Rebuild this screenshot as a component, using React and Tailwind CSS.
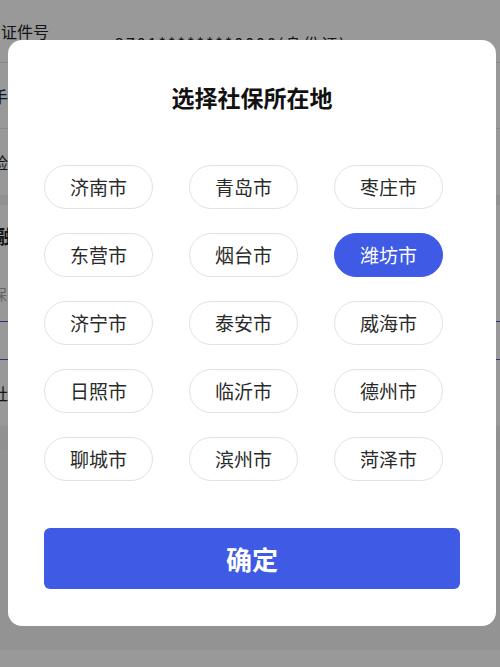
import React, { useState } from 'react';

const CITIES = [
  '济南市', '青岛市', '枣庄市',
  '东营市', '烟台市', '潍坊市',
  '济宁市', '泰安市', '威海市',
  '日照市', '临沂市', '德州市',
  '聊城市', '滨州市', '菏泽市',
];

// 背景页面（被遮罩盖住的表单）
const BackgroundPage = () => (
  <div className="w-full h-[667px] bg-white text-[#222]">
    <div className="h-[63px] border-b border-[#e8e8e8] flex items-center text-[16px] relative">
      <span className="pl-[1px]">证件号</span>
      <span className="absolute left-[115px] top-[31px] text-[16px] tracking-[2px]">3701********0000(身份证)</span>
    </div>
    <div className="h-[66px] border-b border-[#e8e8e8] flex items-center text-[16px] -ml-[8px]">
      <span>手机号</span>
    </div>
    <div className="h-[66px] flex items-center text-[16px] -ml-[8px]">
      <span>险种</span>
    </div>
    <div className="h-[10px] bg-[#f2f2f2]" />
    <div className="h-[62px] flex items-center text-[19px] font-bold -ml-[6px]">
      <span>融合缴费</span>
    </div>
    <div className="h-[55px] border-b border-[#4a55b8] flex items-center text-[15px] text-[#aaa] -ml-[8px]">
      <span>保险信息</span>
    </div>
    <div className="h-[38px] border-b border-[#4a55b8]" />
    <div className="h-[66px] flex items-center text-[16px] -ml-[8px]">
      <span>社保所在地</span>
    </div>
    <div className="h-[24px] bg-[#f2f2f2]" />
    <div className="h-[200px] bg-[#f6f6f6]" />
  </div>
);

export default function App() {
  const [selected, setSelected] = useState('潍坊市');

  return (
    <div
      className="relative w-full h-[667px] overflow-hidden"
      style={{ fontFamily: '"Noto Sans CJK SC", "Noto Sans", sans-serif' }}
    >
      <BackgroundPage />

      {/* 遮罩 */}
      <div className="absolute inset-0 bg-black/40" />

      {/* 弹窗 */}
      <div className="absolute left-[8px] top-[40px] w-[488px] h-[586px] bg-white rounded-[14px] pt-[42px] px-[36px]">
        <h3 className="text-center text-[23px] leading-[30px] font-bold text-[#111]">选择社保所在地</h3>

        <div className="mt-[53px] grid grid-cols-[109px_109px_109px] gap-x-[36px] gap-y-[24px]">
          {CITIES.map(c => (
            <button
              key={c}
              type="button"
              onClick={() => setSelected(c)}
              className={
                c === selected
                  ? 'h-[44px] rounded-full bg-[#3f5ae4] border-[1.5px] border-[#3f5ae4] text-white text-[19px]'
                  : 'h-[44px] rounded-full bg-white border-[1.5px] border-[#e2e2e2] text-[#2a2a2a] text-[19px]'
              }
            >
              {c}
            </button>
          ))}
        </div>

        <button
          type="button"
          className="mt-[47px] w-[416px] h-[61px] rounded-[6px] bg-[#3f5ae4] text-white text-[26px] font-bold"
        >
          确定
        </button>
      </div>
    </div>
  );
}
